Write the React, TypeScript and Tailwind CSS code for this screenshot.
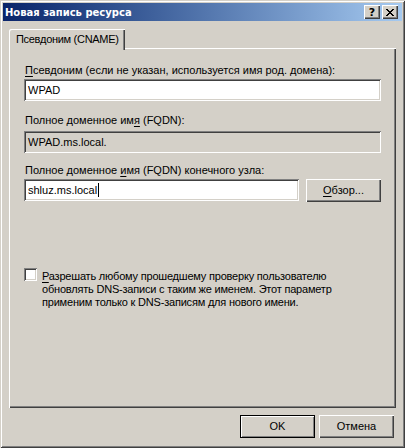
import React from "react";

const sunken =
  "shadow-[inset_1px_1px_#808080,inset_-1px_-1px_#ffffff,inset_2px_2px_#404040,inset_-2px_-2px_#d4d0c8]";
const raised =
  "shadow-[inset_1px_1px_#ffffff,inset_-1px_-1px_#404040,inset_-2px_-2px_#808080]";

function U({ children }: { children: React.ReactNode }) {
  return <span className="underline underline-offset-[2px]">{children}</span>;
}

function CaptionButton({ children }: { children: React.ReactNode }) {
  return (
    <div
      className={`flex h-[14px] w-[16px] items-center justify-center bg-[#d4d0c8] ${raised}`}
    >
      {children}
    </div>
  );
}

function Field({
  value,
  disabled,
  caret,
  className = "",
}: {
  value: string;
  disabled?: boolean;
  caret?: boolean;
  className?: string;
}) {
  return (
    <div
      className={`flex h-[22px] items-center pl-[4px] ${disabled ? "bg-[#d4d0c8]" : "bg-white"} ${sunken} ${className}`}
    >
      <span className="whitespace-nowrap">{value}</span>
      {caret && <span className="ml-[1px] inline-block h-[14px] w-px bg-black" />}
    </div>
  );
}

function Button({
  children,
  primary,
  className = "",
}: {
  children: React.ReactNode;
  primary?: boolean;
  className?: string;
}) {
  return (
    <div
      className={`flex h-[23px] w-[75px] items-center justify-center bg-[#d4d0c8] ${
        primary
          ? "border border-black shadow-[inset_1px_1px_#ffffff,inset_-1px_-1px_#808080]"
          : raised
      } ${className}`}
    >
      {children}
    </div>
  );
}

export default function App() {
  return (
    <div className="h-[448px] w-[405px] bg-[#d4d0c8] font-['Liberation_Sans',Arial,sans-serif] text-[11px] leading-[13px] text-black">
      <div className="flex h-full flex-col p-[3px] shadow-[inset_1px_1px_#d4d0c8,inset_-1px_-1px_#404040,inset_2px_2px_#ffffff,inset_-2px_-2px_#808080]">
        <div className="flex h-[18px] items-center justify-between bg-linear-to-r from-[#0a246a] to-[#a6caf0] pl-[2px] pr-[4px]">
          <span className="font-['DejaVu_Sans',sans-serif] text-[10px] font-bold text-white">
            Новая запись ресурса
          </span>
          <div className="flex gap-[2px]">
            <CaptionButton>
              <span className="font-['DejaVu_Sans',sans-serif] text-[11px] font-bold leading-none">?</span>
            </CaptionButton>
            <CaptionButton>
              <svg width="8" height="7" viewBox="0 0 8 7" shapeRendering="crispEdges">
                <path
                  d="M0 0h2v1h-2zM6 0h2v1h-2zM1 1h2v1h-2zM5 1h2v1h-2zM2 2h4v1h-4zM3 3h2v1h-2zM2 4h4v1h-4zM1 5h2v1h-2zM5 5h2v1h-2zM0 6h2v1h-2zM6 6h2v1h-2z"
                  fill="#000"
                />
              </svg>
            </CaptionButton>
          </div>
        </div>

        <div className="mt-[8px] flex flex-col px-[6px]">
          <div className="relative z-10 flex h-[21px] w-[116px] items-center rounded-tl-[2px] bg-[#d4d0c8] pl-[7px] tracking-[-0.3px] shadow-[inset_1px_1px_#ffffff,inset_-1px_0_#404040,inset_-2px_0_#808080]">
            Псевдоним (CNAME)
          </div>
          <div className="-mt-[2px] flex h-[360px] flex-col px-[15px] shadow-[inset_1px_1px_#ffffff,inset_-1px_-1px_#404040,inset_-2px_-2px_#808080]">
            <div className="mt-[16px] pl-[1px]">
              <U>П</U>севдоним (если не указан, используется имя род. домена):
            </div>
            <Field value="WPAD" className="mt-[2px]" />

            <div className="mt-[13px] pl-[1px]">
              Полное доменное им<U>я</U> (FQDN):
            </div>
            <Field value="WPAD.ms.local." disabled className="mt-[4px]" />

            <div className="mt-[11px] pl-[1px]">
              Полное доменное <U>и</U>мя (FQDN) конечного узла:
            </div>
            <div className="mt-[2px] flex gap-[7px]">
              <Field value="shluz.ms.local" caret className="w-[275px]" />
              <Button className="w-[75px]">
                <span>
                  <U>О</U>бзор...
                </span>
              </Button>
            </div>

            <div className="mt-[66px] flex items-start gap-[5px]">
              <div className={`h-[13px] w-[13px] shrink-0 bg-white ${sunken}`} />
              <div className="mt-[2px] whitespace-nowrap tracking-[-0.2px]">
                <U>Р</U>азрешать любому прошедшему проверку пользователю
                <br />
                обновлять DNS-записи с таким же именем. Этот параметр
                <br />
                применим только к DNS-записям для нового имени.
              </div>
            </div>
          </div>

          <div className="mt-[7px] flex justify-end gap-[4px] pr-[2px]">
            <Button primary>OK</Button>
            <Button>Отмена</Button>
          </div>
        </div>
      </div>
    </div>
  );
}
